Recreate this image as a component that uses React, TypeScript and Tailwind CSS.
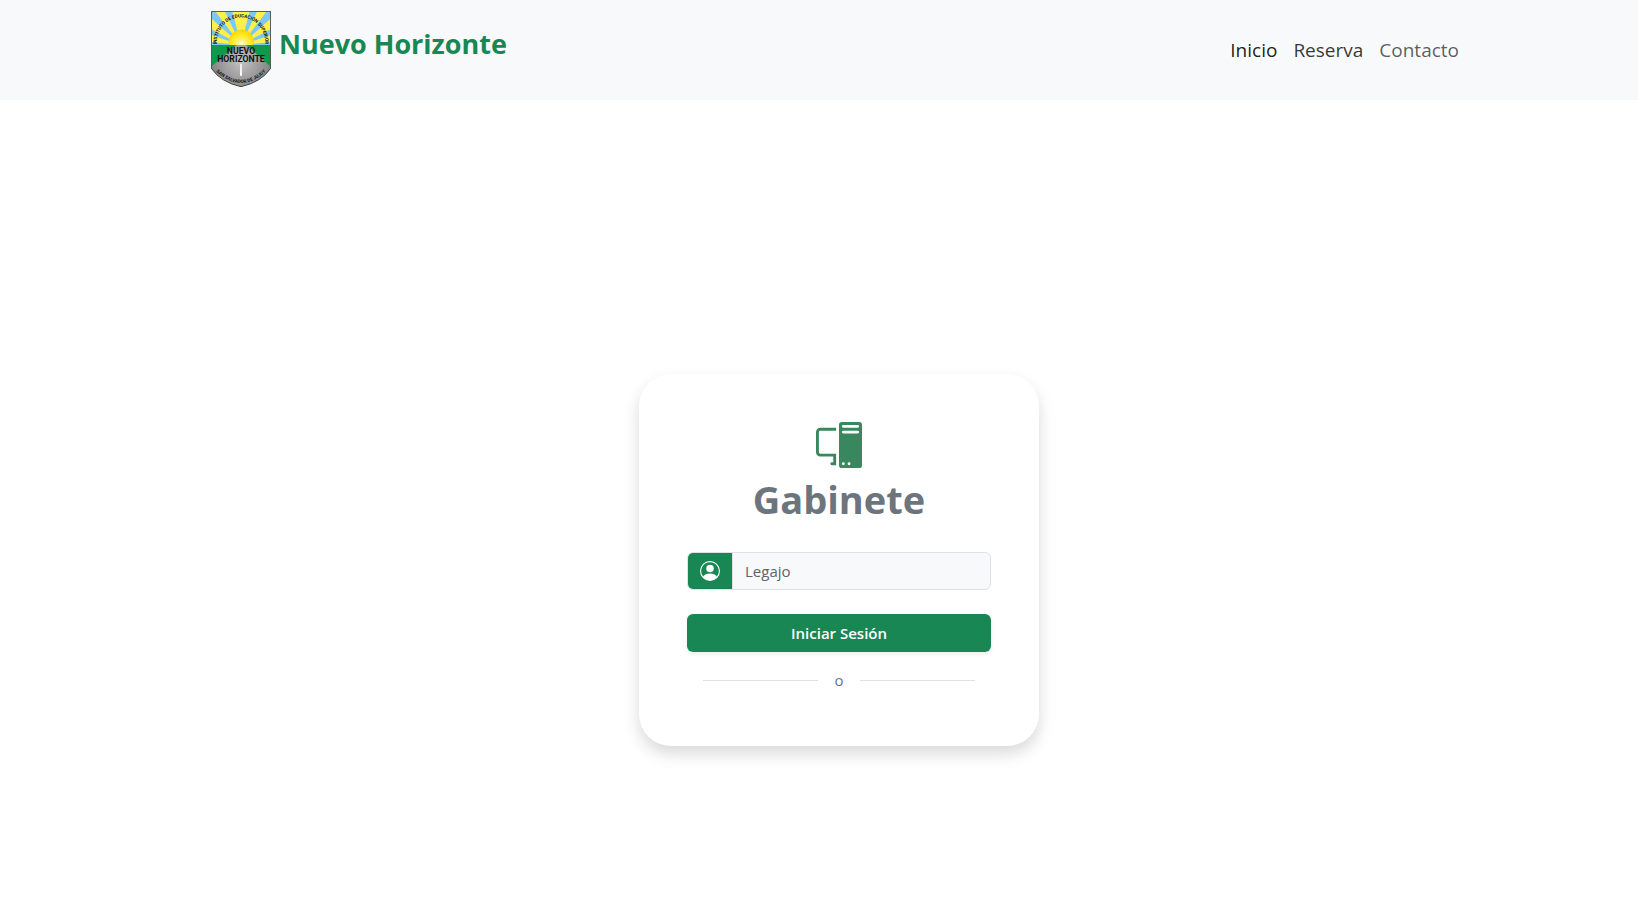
import { BsPcDisplay, BsPersonCircle } from "react-icons/bs";

function Crest() {
  return (
    <svg viewBox="0 0 180 228" className="h-[76px] w-[60px] shrink-0" role="img" aria-label="Instituto Nuevo Horizonte">
      <defs>
        <clipPath id="shield">
          <path d="M1 1H179V172Q150 214 90 227Q30 214 1 172Z" />
        </clipPath>
        <radialGradient id="sun" cx="0.5" cy="0.6" r="0.55">
          <stop offset="0" stopColor="#fffde0" />
          <stop offset="0.5" stopColor="#fff04a" />
          <stop offset="1" stopColor="#fbdc00" />
        </radialGradient>
        <radialGradient id="road" gradientUnits="userSpaceOnUse" cx="90" cy="150" r="90">
          <stop offset="0" stopColor="#c4c2c2" />
          <stop offset="1" stopColor="#858384" />
        </radialGradient>
        <path id="arc-top" d="M17 103V97A73 78 0 0 1 163 97V103" />
        <path id="arc-bottom" d="M18 184Q90 248 162 184" />
      </defs>
      <g clipPath="url(#shield)">
        <rect width="180" height="104" fill="#7cc8f2" />
        <g fill="#fff04d">
          <path d="M90 102L64 0H116Z" />
          <path d="M90 102L12 0H41Z" />
          <path d="M90 102L168 0H139Z" />
          <path d="M90 102L0 22V54Z" />
          <path d="M90 102L180 22V54Z" />
          <path d="M90 102L0 72V93Z" />
          <path d="M90 102L180 72V93Z" />
        </g>
        <circle cx="91" cy="93" r="37" fill="url(#sun)" stroke="#f0c800" strokeWidth="1" />
        <rect y="102" width="180" height="126" fill="#0e9a4b" />
        <path d="M76 102H106L180 168V228H0V168Z" fill="url(#road)" />
        <path d="M88 158H92L93 194H87Z" fill="#fff" />
      </g>
      <path d="M1 1H179V172Q150 214 90 227Q30 214 1 172Z" fill="none" stroke="#444" strokeWidth="3" />
      <g fill="#111" fontFamily="'Liberation Sans Narrow', Roboto, 'Liberation Sans', sans-serif" fontWeight="700">
        <text fontSize="14">
          <textPath href="#arc-top" startOffset="50%" textAnchor="middle">INSTITUTO DE EDUCACIÓN SUPERIOR</textPath>
        </text>
        <text x="90" y="130" fontSize="26" textAnchor="middle">NUEVO</text>
        <text x="90" y="154" fontSize="26" textAnchor="middle">HORIZONTE</text>
        <text fontSize="14">
          <textPath href="#arc-bottom" startOffset="50%" textAnchor="middle">SAN SALVADOR DE JUJUY</textPath>
        </text>
      </g>
    </svg>
  );
}

export default function App() {
  return (
    <div className="flex min-h-screen flex-col bg-white font-['Segoe_UI','Open_Sans','Noto_Sans',sans-serif] text-[15px] leading-6 text-[#212529]">
      <header className="h-[100px] bg-[#f8f9fb]">
        <div className="mx-auto flex h-full max-w-[1320px] items-center justify-between pr-3 pl-[52px]">
          <a href="#" className="flex gap-2 pb-0.5 text-[27px] leading-[66px] font-bold text-[#198754]">
            <Crest />
            <span>Nuevo Horizonte</span>
          </a>
          <nav className="flex text-[19px] leading-7 text-black/65">
            <a href="#" className="px-2 py-2 text-black/90">Inicio</a>
            <a href="#" className="px-2 py-2 text-black/80">Reserva</a>
            <a href="#" className="px-2 py-2">Contacto</a>
          </nav>
        </div>
      </header>

      <main className="flex flex-1 items-center justify-center pt-[103px] pl-10">
        <form className="flex w-[400px] flex-col rounded-[32px] bg-white px-12 pt-12 pb-[54px] shadow-[0_8px_16px_rgba(0,0,0,0.15)]">
          <BsPcDisplay className="size-[46px] shrink-0 self-center text-[#39875f]" />
          <h1 className="mt-2 text-center text-[38px] leading-[46px] font-bold text-[#6c757d]">Gabinete</h1>
          <div className="mt-[30px] flex h-[38px] shrink-0 overflow-hidden rounded-md border border-[#dee2e6] bg-[#f8f9fb]">
            <label htmlFor="legajo" aria-label="Legajo" className="flex w-11 shrink-0 items-center justify-center bg-[#198754] text-white">
              <BsPersonCircle className="size-5" />
            </label>
            <input
              id="legajo"
              type="text"
              placeholder="Legajo"
              className="min-w-0 flex-1 border-l border-[#dee2e6] px-3 outline-none placeholder:text-[#5f6368]"
            />
          </div>
          <button
            type="submit"
            className="mt-6 h-[38px] shrink-0 rounded-md bg-[#198754] font-semibold text-white shadow-[0_2px_4px_rgba(0,0,0,0.075)]"
          >
            Iniciar Sesión
          </button>
          <div className="mt-4 flex items-center gap-4 px-4 text-[#6c757d]">
            <span className="h-px flex-1 bg-[#dee2e6]" />
            <span>o</span>
            <span className="h-px flex-1 bg-[#dee2e6]" />
          </div>
        </form>
      </main>
    </div>
  );
}
